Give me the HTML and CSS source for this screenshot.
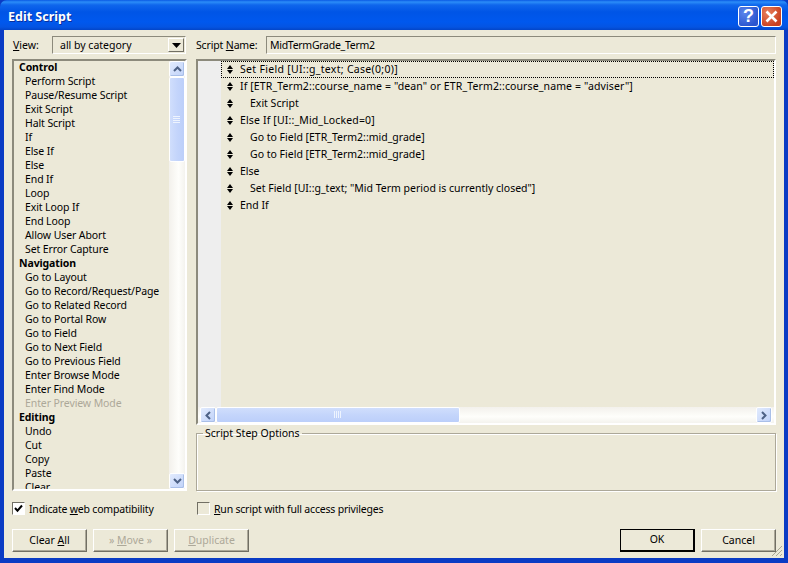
FILE: index.html
```html
<!DOCTYPE html>
<html lang="en">
<head>
<meta charset="utf-8">
<title>Edit Script</title>
<link rel="stylesheet" href="styles.css">
</head>
<body>
<div class="window">
  <header class="titlebar">
    <span class="title">Edit Script</span>
    <div class="caption-btns">
      <button class="cap cap-help">?</button>
      <button class="cap cap-close"><svg width="21" height="21" viewBox="0 0 21 21"><path d="M5.5 5.5l10 10M15.5 5.5l-10 10" stroke="#fff" stroke-width="2.6" fill="none"/></svg></button>
    </div>
  </header>
  <div class="client">
    <div class="toprow">
      <div class="view-group">
        <label class="lbl view-lbl"><span class="u">V</span>iew:</label>
        <div class="combo"><span>all by category</span><span class="combo-btn"><svg width="9" height="5" viewBox="0 0 9 5"><path d="M0 0h9L4.5 5z" fill="#000"/></svg></span></div>
      </div>
      <div class="name-group">
        <label class="lbl name-lbl">Script <span class="u">N</span>ame:</label>
        <div class="input">MidTermGrade_Term2</div>
      </div>
    </div>
    <div class="main">
      <div class="steps sunken">
        <ul class="step-list">
          <li class="cat">Control</li>
          <li>Perform Script</li>
          <li>Pause/Resume Script</li>
          <li>Exit Script</li>
          <li>Halt Script</li>
          <li>If</li>
          <li>Else If</li>
          <li>Else</li>
          <li>End If</li>
          <li>Loop</li>
          <li>Exit Loop If</li>
          <li>End Loop</li>
          <li>Allow User Abort</li>
          <li>Set Error Capture</li>
          <li class="cat">Navigation</li>
          <li>Go to Layout</li>
          <li>Go to Record/Request/Page</li>
          <li>Go to Related Record</li>
          <li>Go to Portal Row</li>
          <li>Go to Field</li>
          <li>Go to Next Field</li>
          <li>Go to Previous Field</li>
          <li>Enter Browse Mode</li>
          <li>Enter Find Mode</li>
          <li class="dim">Enter Preview Mode</li>
          <li class="cat">Editing</li>
          <li>Undo</li>
          <li>Cut</li>
          <li>Copy</li>
          <li>Paste</li>
          <li>Clear</li>
        </ul>
        <div class="vscroll">
          <span class="sb-btn"><svg width="9" height="6" viewBox="0 0 9 6"><path d="M1 5l3.5-3.5L8 5" stroke="#4d6185" stroke-width="2" fill="none"/></svg></span>
          <div class="vthumb"><svg width="8" height="8" viewBox="0 0 8 8"><path d="M0 .5h7M0 2.5h7M0 4.5h7M0 6.5h7" stroke="#eef4fe"/></svg></div>
          <span class="sb-fill"></span>
          <span class="sb-btn"><svg width="9" height="6" viewBox="0 0 9 6"><path d="M1 1l3.5 3.5L8 1" stroke="#4d6185" stroke-width="2" fill="none"/></svg></span>
        </div>
      </div>
      <div class="right">
        <div class="script sunken">
          <div class="script-body">
            <div class="gutter"></div>
            <ol class="lines">
              <li class="line sel wide-3"><i class="mv"></i>Set Field [UI::g_text; Case(0;0)]</li>
              <li class="line wide-1"><i class="mv"></i>If [ETR_Term2::course_name = "dean" or ETR_Term2::course_name = "adviser"]</li>
              <li class="line ind"><i class="mv"></i>Exit Script</li>
              <li class="line wide-2"><i class="mv"></i>Else If [UI::_Mid_Locked=0]</li>
              <li class="line ind"><i class="mv"></i>Go to Field [ETR_Term2::mid_grade]</li>
              <li class="line ind"><i class="mv"></i>Go to Field [ETR_Term2::mid_grade]</li>
              <li class="line"><i class="mv"></i>Else</li>
              <li class="line ind"><i class="mv"></i>Set Field [UI::g_text; "Mid Term period is currently closed"]</li>
              <li class="line"><i class="mv"></i>End If</li>
            </ol>
          </div>
          <div class="hscroll">
            <span class="sb-btn"><svg width="6" height="9" viewBox="0 0 6 9"><path d="M5 1L1.5 4.5 5 8" stroke="#4d6185" stroke-width="2" fill="none"/></svg></span>
            <div class="hthumb"><svg width="8" height="8" viewBox="0 0 8 8"><path d="M.5 0v7M2.5 0v7M4.5 0v7M6.5 0v7" stroke="#eef4fe"/></svg></div>
            <span class="sb-fill"></span>
            <span class="sb-btn"><svg width="6" height="9" viewBox="0 0 6 9"><path d="M1 1l3.5 3.5L1 8" stroke="#4d6185" stroke-width="2" fill="none"/></svg></span>
          </div>
        </div>
        <fieldset class="options">
          <legend>Script Step Options</legend>
        </fieldset>
      </div>
    </div>
    <div class="checks">
      <label class="check check-web"><span class="box"><svg width="9" height="9" viewBox="0 0 9 9"><path d="M1 4l2.5 2.7L8 1.5" stroke="#000" stroke-width="2" fill="none"/></svg></span><span>Indicate <span class="u">w</span>eb compatibility</span></label>
      <label class="check"><span class="box"></span><span><span class="u">R</span>un script with full access privileges</span></label>
    </div>
    <div class="buttons">
      <div class="btn-group">
        <button class="btn">Clear <span class="u">A</span>ll</button>
        <button class="btn off">» <span class="u">M</span>ove »</button>
        <button class="btn off"><span class="u">D</span>uplicate</button>
      </div>
      <div class="btn-group">
        <button class="btn default">OK</button>
        <button class="btn">Cancel</button>
      </div>
    </div>
    <svg class="grip" width="12" height="12" viewBox="0 0 12 12"><path d="M11 1L1 11M11 5l-6 6M11 9l-2 2" stroke="#a9a794" fill="none"/></svg>
  </div>
</div>
</body>
</html>
```
FILE: styles.css
```css
* { box-sizing: border-box; }
html, body { margin: 0; padding: 0; }
body {
  width: 788px; height: 563px; overflow: hidden; background: #0a3bc4;
  font: 10.5px/14px "Noto Sans", "DejaVu Sans", sans-serif; color: #000;
}
ul, ol { list-style: none; margin: 0; padding: 0; }
button { font: inherit; color: inherit; margin: 0; padding: 0; }
.u { text-decoration: underline; }

.window { display: flex; flex-direction: column; height: 563px; }
.titlebar {
  height: 30px; flex: none; display: flex; align-items: center; justify-content: space-between;
  padding: 2px 6px 0 8px; border-radius: 7px 7px 0 0;
  background: linear-gradient(#0a5ae4 0, #2b8df8 2px, #0f66ec 5px, #0055e6 12px, #0058ee 22px, #0454e2 27px, #0345c8 30px);
}
.title {
  color: #fff; font: bold 12.5px "Noto Sans", "DejaVu Sans", sans-serif;
  text-shadow: 1px 1px 0 #0a2f9c; padding-top: 1px;
}
.caption-btns { display: flex; gap: 2px; }
.cap {
  width: 21px; height: 21px; border: 1px solid #fff; border-radius: 3px; display: block; color: #fff;
  font: bold 18px/19px "Liberation Sans", sans-serif; text-align: center;
}
.cap-help { background: radial-gradient(circle at 30% 30%, #5c86ec, #2a55cf 75%); }
.cap-close { background: radial-gradient(circle at 30% 30%, #e8805e, #c9401f 75%); }
.cap-close svg { display: block; margin: -1px; }

.client {
  flex: 1; position: relative; margin: 0 4px 5px 4px; background: #ece9d8;
  padding: 6px 8px 0 8px; display: flex; flex-direction: column;
}
.toprow { display: flex; height: 18px; gap: 10px; }
.view-group { width: 174px; display: flex; align-items: center; }
.view-lbl { width: 40px; flex: none; padding-left: 1px; }
.combo {
  flex: 1; height: 18px; display: flex; align-items: center; justify-content: space-between;
  padding: 0 1px 0 7px; border: 1px solid; border-color: #8c8a7c #fff #fff #8c8a7c; background: #ece9d8;
}
.combo-btn {
  width: 16px; height: 14px; display: flex; align-items: center; justify-content: center;
  border: 1px solid; border-color: #fff #716f64 #716f64 #fff; background: #ece9d8;
}
.name-group { flex: 1; display: flex; align-items: center; }
.name-lbl { width: 70px; flex: none; letter-spacing: -.15px; }
.input {
  flex: 1; height: 18px; padding: 1px 6px 0 3px; line-height: 14px; letter-spacing: -.28px;
  border: 1px solid; border-color: #8c8a7c #fff #fff #8c8a7c; background: #ece9d8;
}

.main { display: flex; gap: 9px; margin-top: 5px; height: 432px; }
.sunken { border: 2px solid; border-color: #8c8a7c #fff #fff #8c8a7c; }
.steps { width: 175px; display: flex; overflow: hidden; }
.step-list { flex: 1; overflow: hidden; margin-top: -1px; letter-spacing: -.1px; }
.step-list li { height: 14px; line-height: 14px; padding-left: 11px; white-space: nowrap; }
.step-list li.cat { font-weight: bold; padding-left: 5px; }
.step-list li.dim { color: #aca899; }

.vscroll { width: 16px; flex: none; display: flex; flex-direction: column; background: linear-gradient(90deg, #f3f1ec, #fefefb 60%, #f4f3ee); }
.sb-btn {
  flex: none; width: 16px; height: 16px; display: flex; align-items: center; justify-content: center;
  background: linear-gradient(135deg, #e2ebfd, #c0d2f9); border: 1px solid #fff; border-radius: 2px;
  box-shadow: inset -1px -1px 0 #a9bfe8;
}
.sb-fill { flex: 1; }
.vthumb {
  height: 85px; flex: none; display: flex; align-items: center; justify-content: center;
  background: linear-gradient(90deg, #d0defc, #c4d5fb 50%, #bccffa); border: 1px solid #fff; border-radius: 2px;
}
.right { width: 580px; display: flex; flex-direction: column; }
.script { height: 366px; display: flex; flex-direction: column; }
.script-body { flex: 1; display: flex; min-height: 0; }
.gutter { width: 23px; flex: none; background: #eeeeee; }
.lines { flex: 1; }
.line {
  height: 17px; line-height: 17px; padding-left: 19px; position: relative; white-space: nowrap;
}
.line.ind { padding-left: 29px; }
.line.sel { outline: 1px dotted #000; outline-offset: -1px; }
.line.wide-1 { letter-spacing: .12px; }
.line.wide-2 { letter-spacing: .15px; }
.line.wide-3 { letter-spacing: .3px; }
.mv { position: absolute; left: 6px; top: 4px; width: 6px; height: 9px; }
.mv::before, .mv::after {
  content: ""; position: absolute; left: 0; border-left: 3px solid transparent; border-right: 3px solid transparent;
}
.mv::before { top: 0; border-bottom: 4px solid #000; }
.mv::after { bottom: 0; border-top: 4px solid #000; }

.hscroll { height: 16px; flex: none; display: flex; background: linear-gradient(#f3f1ec, #fefefb 60%, #f4f3ee); padding: 0 2px; }
.hthumb {
  width: 244px; flex: none; display: flex; align-items: center; justify-content: center;
  background: linear-gradient(#d0defc, #c4d5fb 50%, #bccffa); border: 1px solid #fff; border-radius: 2px;
}

.options {
  margin: 2px 0 0; padding: 0; height: 64px; flex: none; min-width: 0;
  border: 1px solid #aca899; box-shadow: 1px 1px 0 #fff, inset 1px 1px 0 #fff;
}
.options legend { margin-left: 6px; padding: 0 2px; line-height: 12px; height: 12px; margin-top: -2px; }

.checks { display: flex; margin-top: 10px; height: 15px; letter-spacing: -.2px; }
.check { display: flex; align-items: center; gap: 4px; }
.check-web { width: 185px; }
.box {
  width: 13px; height: 13px; display: flex; align-items: center; justify-content: center; flex: none;
  border: 1px solid; border-color: #716f64 #fff #fff #716f64; background: #ece9d8;
}
.check-web .box { background: #fff; }

.buttons { display: flex; justify-content: space-between; margin-top: 13px; }
.btn-group { display: flex; gap: 6px; }
.btn {
  width: 75px; height: 23px; background: #ece9d8; text-align: center; padding-bottom: 2px;
  border: 1px solid; border-color: #fff #716f64 #716f64 #fff;
  box-shadow: inset -1px -1px 0 #aca899;
}
.btn.off { color: #aca899; }
.btn.default { border: 1px solid #000; border-width: 1px 2px 2px 1px; box-shadow: none; }
.grip { position: absolute; right: 1px; bottom: 1px; }
```
